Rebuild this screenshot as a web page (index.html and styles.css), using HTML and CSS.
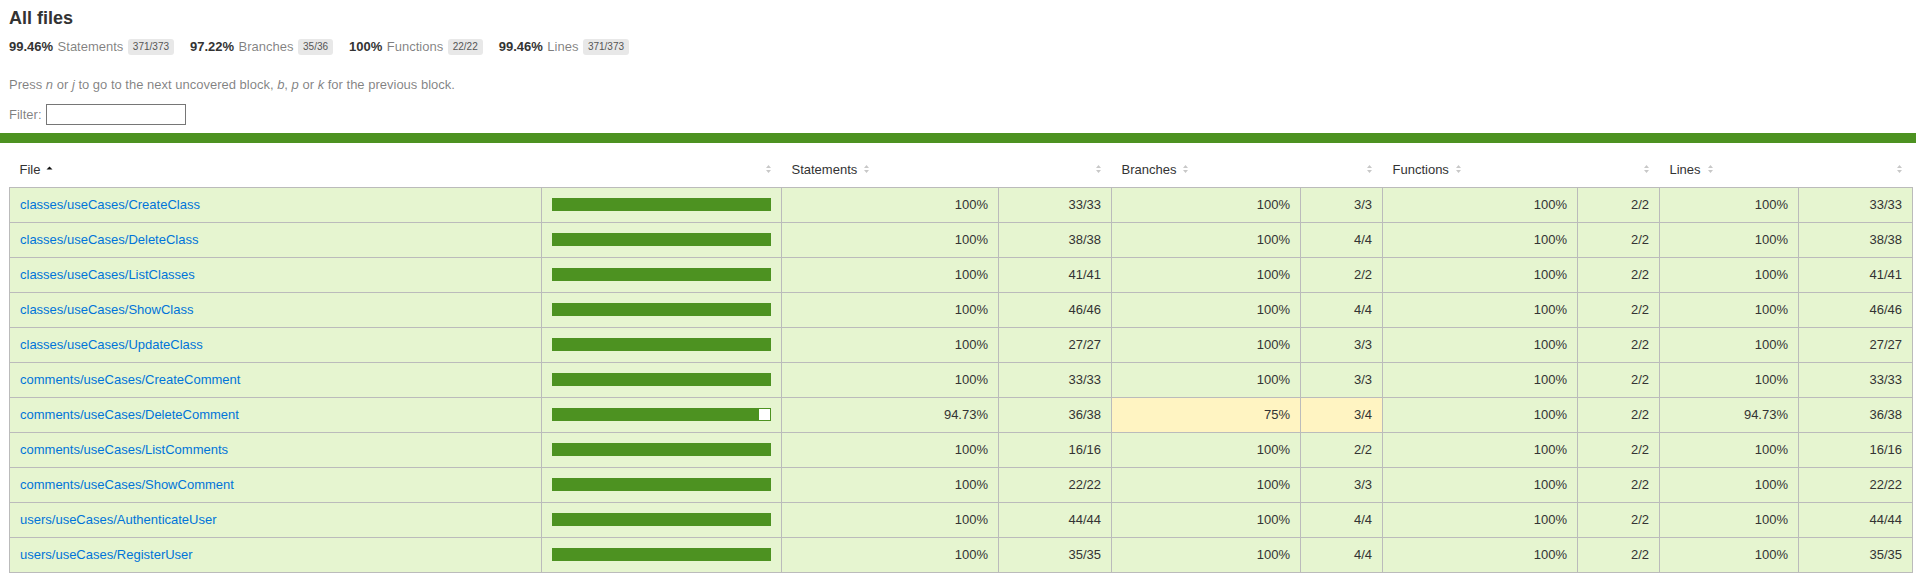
FILE: index.html
```html
<!DOCTYPE html>
<html lang="en">
<head>
<meta charset="utf-8">
<title>Code coverage report for All files</title>
<link rel="stylesheet" href="styles.css">
</head>
<body>
<div class="wrapper">
  <header class="summary">
    <h1>All files</h1>
    <div class="stats">
      <div class="stat"><span class="strong">99.46%</span><span class="quiet">Statements</span><span class="fraction">371/373</span></div>
      <div class="stat"><span class="strong">97.22%</span><span class="quiet">Branches</span><span class="fraction">35/36</span></div>
      <div class="stat"><span class="strong">100%</span><span class="quiet">Functions</span><span class="fraction">22/22</span></div>
      <div class="stat"><span class="strong">99.46%</span><span class="quiet">Lines</span><span class="fraction">371/373</span></div>
    </div>
    <p class="quiet hint">Press <em>n</em> or <em>j</em> to go to the next uncovered block, <em>b</em>, <em>p</em> or <em>k</em> for the previous block.</p>
    <div class="quiet filter"><label for="fileSearch">Filter:</label><input type="search" id="fileSearch" class="filter-input"></div>
  </header>
  <div class="status-line high"></div>
  <div class="table-wrap">
    <table class="coverage-summary">
      <colgroup>
        <col class="w-file"><col class="w-pic"><col class="w-spct"><col class="w-sabs"><col class="w-bpct"><col class="w-babs"><col class="w-fpct"><col class="w-fabs"><col class="w-lpct"><col class="w-labs">
      </colgroup>
      <thead>
        <tr>
          <th class="file sorted">File<svg class="sorter" width="7" height="10" viewBox="0 0 7 10"><path d="M3.5 2.5 L6.5 5.5 H0.5 Z" fill="#111"/></svg></th>
          <th class="pic"><svg class="sorter" width="7" height="10" viewBox="0 0 7 10"><path d="M3.5 1 L6 4 H1 Z M3.5 9 L1 6 H6 Z" fill="#c8c8c8"/></svg></th>
          <th class="pct">Statements<svg class="sorter" width="7" height="10" viewBox="0 0 7 10"><path d="M3.5 1 L6 4 H1 Z M3.5 9 L1 6 H6 Z" fill="#c8c8c8"/></svg></th>
          <th class="abs"><svg class="sorter" width="7" height="10" viewBox="0 0 7 10"><path d="M3.5 1 L6 4 H1 Z M3.5 9 L1 6 H6 Z" fill="#c8c8c8"/></svg></th>
          <th class="pct">Branches<svg class="sorter" width="7" height="10" viewBox="0 0 7 10"><path d="M3.5 1 L6 4 H1 Z M3.5 9 L1 6 H6 Z" fill="#c8c8c8"/></svg></th>
          <th class="abs"><svg class="sorter" width="7" height="10" viewBox="0 0 7 10"><path d="M3.5 1 L6 4 H1 Z M3.5 9 L1 6 H6 Z" fill="#c8c8c8"/></svg></th>
          <th class="pct">Functions<svg class="sorter" width="7" height="10" viewBox="0 0 7 10"><path d="M3.5 1 L6 4 H1 Z M3.5 9 L1 6 H6 Z" fill="#c8c8c8"/></svg></th>
          <th class="abs"><svg class="sorter" width="7" height="10" viewBox="0 0 7 10"><path d="M3.5 1 L6 4 H1 Z M3.5 9 L1 6 H6 Z" fill="#c8c8c8"/></svg></th>
          <th class="pct">Lines<svg class="sorter" width="7" height="10" viewBox="0 0 7 10"><path d="M3.5 1 L6 4 H1 Z M3.5 9 L1 6 H6 Z" fill="#c8c8c8"/></svg></th>
          <th class="abs"><svg class="sorter" width="7" height="10" viewBox="0 0 7 10"><path d="M3.5 1 L6 4 H1 Z M3.5 9 L1 6 H6 Z" fill="#c8c8c8"/></svg></th>
        </tr>
      </thead>
      <tbody>
        <tr>
          <td class="file high"><a href="#">classes/useCases/CreateClass</a></td>
          <td class="pic high"><div class="chart"><div class="cover-fill" style="width: 100%"></div></div></td>
          <td class="pct high">100%</td><td class="abs high">33/33</td>
          <td class="pct high">100%</td><td class="abs high">3/3</td>
          <td class="pct high">100%</td><td class="abs high">2/2</td>
          <td class="pct high">100%</td><td class="abs high">33/33</td>
        </tr>
        <tr>
          <td class="file high"><a href="#">classes/useCases/DeleteClass</a></td>
          <td class="pic high"><div class="chart"><div class="cover-fill" style="width: 100%"></div></div></td>
          <td class="pct high">100%</td><td class="abs high">38/38</td>
          <td class="pct high">100%</td><td class="abs high">4/4</td>
          <td class="pct high">100%</td><td class="abs high">2/2</td>
          <td class="pct high">100%</td><td class="abs high">38/38</td>
        </tr>
        <tr>
          <td class="file high"><a href="#">classes/useCases/ListClasses</a></td>
          <td class="pic high"><div class="chart"><div class="cover-fill" style="width: 100%"></div></div></td>
          <td class="pct high">100%</td><td class="abs high">41/41</td>
          <td class="pct high">100%</td><td class="abs high">2/2</td>
          <td class="pct high">100%</td><td class="abs high">2/2</td>
          <td class="pct high">100%</td><td class="abs high">41/41</td>
        </tr>
        <tr>
          <td class="file high"><a href="#">classes/useCases/ShowClass</a></td>
          <td class="pic high"><div class="chart"><div class="cover-fill" style="width: 100%"></div></div></td>
          <td class="pct high">100%</td><td class="abs high">46/46</td>
          <td class="pct high">100%</td><td class="abs high">4/4</td>
          <td class="pct high">100%</td><td class="abs high">2/2</td>
          <td class="pct high">100%</td><td class="abs high">46/46</td>
        </tr>
        <tr>
          <td class="file high"><a href="#">classes/useCases/UpdateClass</a></td>
          <td class="pic high"><div class="chart"><div class="cover-fill" style="width: 100%"></div></div></td>
          <td class="pct high">100%</td><td class="abs high">27/27</td>
          <td class="pct high">100%</td><td class="abs high">3/3</td>
          <td class="pct high">100%</td><td class="abs high">2/2</td>
          <td class="pct high">100%</td><td class="abs high">27/27</td>
        </tr>
        <tr>
          <td class="file high"><a href="#">comments/useCases/CreateComment</a></td>
          <td class="pic high"><div class="chart"><div class="cover-fill" style="width: 100%"></div></div></td>
          <td class="pct high">100%</td><td class="abs high">33/33</td>
          <td class="pct high">100%</td><td class="abs high">3/3</td>
          <td class="pct high">100%</td><td class="abs high">2/2</td>
          <td class="pct high">100%</td><td class="abs high">33/33</td>
        </tr>
        <tr>
          <td class="file high"><a href="#">comments/useCases/DeleteComment</a></td>
          <td class="pic high"><div class="chart"><div class="cover-fill" style="width: 94.73%"></div><div class="cover-empty"></div></div></td>
          <td class="pct high">94.73%</td><td class="abs high">36/38</td>
          <td class="pct medium">75%</td><td class="abs medium">3/4</td>
          <td class="pct high">100%</td><td class="abs high">2/2</td>
          <td class="pct high">94.73%</td><td class="abs high">36/38</td>
        </tr>
        <tr>
          <td class="file high"><a href="#">comments/useCases/ListComments</a></td>
          <td class="pic high"><div class="chart"><div class="cover-fill" style="width: 100%"></div></div></td>
          <td class="pct high">100%</td><td class="abs high">16/16</td>
          <td class="pct high">100%</td><td class="abs high">2/2</td>
          <td class="pct high">100%</td><td class="abs high">2/2</td>
          <td class="pct high">100%</td><td class="abs high">16/16</td>
        </tr>
        <tr>
          <td class="file high"><a href="#">comments/useCases/ShowComment</a></td>
          <td class="pic high"><div class="chart"><div class="cover-fill" style="width: 100%"></div></div></td>
          <td class="pct high">100%</td><td class="abs high">22/22</td>
          <td class="pct high">100%</td><td class="abs high">3/3</td>
          <td class="pct high">100%</td><td class="abs high">2/2</td>
          <td class="pct high">100%</td><td class="abs high">22/22</td>
        </tr>
        <tr>
          <td class="file high"><a href="#">users/useCases/AuthenticateUser</a></td>
          <td class="pic high"><div class="chart"><div class="cover-fill" style="width: 100%"></div></div></td>
          <td class="pct high">100%</td><td class="abs high">44/44</td>
          <td class="pct high">100%</td><td class="abs high">4/4</td>
          <td class="pct high">100%</td><td class="abs high">2/2</td>
          <td class="pct high">100%</td><td class="abs high">44/44</td>
        </tr>
        <tr>
          <td class="file high"><a href="#">users/useCases/RegisterUser</a></td>
          <td class="pic high"><div class="chart"><div class="cover-fill" style="width: 100%"></div></div></td>
          <td class="pct high">100%</td><td class="abs high">35/35</td>
          <td class="pct high">100%</td><td class="abs high">4/4</td>
          <td class="pct high">100%</td><td class="abs high">2/2</td>
          <td class="pct high">100%</td><td class="abs high">35/35</td>
        </tr>
      </tbody>
    </table>
  </div>
</div>
</body>
</html>
```

FILE: styles.css
```css
*, *::before, *::after { box-sizing: border-box; }

html, body {
  margin: 0;
  padding: 0;
}

body {
  font-family: "Liberation Sans", Arial, Helvetica, sans-serif;
  font-size: 13px;
  color: #333;
  background: #fff;
}

a {
  color: #0074D9;
  text-decoration: none;
}

.summary {
  padding: 8px 10px 0 9px;
}

h1 {
  margin: 0;
  font-size: 18px;
  line-height: 20px;
  font-weight: bold;
}

.stats {
  display: flex;
  margin-top: 11px;
}

.stat {
  display: flex;
  align-items: center;
  gap: 4.5px;
  margin-right: 16px;
  line-height: 16px;
}

.strong { font-weight: bold; }

.quiet { color: rgba(0, 0, 0, 0.5); }

.fraction {
  font-family: "Liberation Sans", Arial, sans-serif;
  font-size: 10px;
  line-height: 10px;
  padding: 3px 5px;
  color: #555;
  background: #e8e8e8;
  border-radius: 3px;
}

.hint {
  margin: 22px 0 0;
  line-height: 16px;
}

.filter {
  display: flex;
  align-items: center;
  gap: 4px;
  margin-top: 11px;
  line-height: 16px;
}

.filter-input {
  width: 140px;
  height: 21px;
  margin: 0;
  padding: 1px 2px;
  border: 1px solid #767676;
  border-radius: 0;
  font: inherit;
  background: #fff;
}

.status-line {
  height: 10px;
  margin-top: 8px;
}

.status-line.high { background: #4d9221; }

.table-wrap {
  padding: 10px 4px 0 9px;
}

.coverage-summary {
  width: 100%;
  border-collapse: collapse;
  table-layout: fixed;
}

.w-file { width: 532px; }
.w-pic { width: 240px; }
.w-spct { width: 217px; }
.w-sabs { width: 113px; }
.w-bpct { width: 189px; }
.w-babs { width: 82px; }
.w-fpct { width: 195px; }
.w-fabs { width: 82px; }
.w-lpct { width: 139px; }
.w-labs { width: 114px; }

.coverage-summary tr { border-bottom: 1px solid #bbb; }

.coverage-summary tbody { border: 1px solid #bbb; }

.coverage-summary td,
.coverage-summary th {
  padding: 10px;
  line-height: 14px;
}

.coverage-summary td { border-right: 1px solid #bbb; }

.coverage-summary th {
  text-align: left;
  font-weight: normal;
  white-space: nowrap;
  color: #333;
}

.coverage-summary th.pic,
.coverage-summary th.abs,
.coverage-summary td.pct,
.coverage-summary td.abs { text-align: right; }

.coverage-summary td.file { white-space: nowrap; }

.coverage-summary td.pic { vertical-align: top; }

.sorter {
  display: inline-block;
  width: 7px;
  height: 10px;
  margin-left: 6px;
  vertical-align: baseline;
}

.coverage-summary th.pic .sorter,
.coverage-summary th.abs .sorter { margin-left: 0; }

.high { background: rgb(230, 245, 208); }
.medium { background: #fff4c2; }

.chart {
  display: flex;
  height: 13px;
  border: 1px solid #4d9221;
}

.cover-fill {
  flex: none;
  height: 100%;
  background: #4d9221;
}

.cover-empty {
  flex: 1;
  height: 100%;
  background: #fff;
}
```
